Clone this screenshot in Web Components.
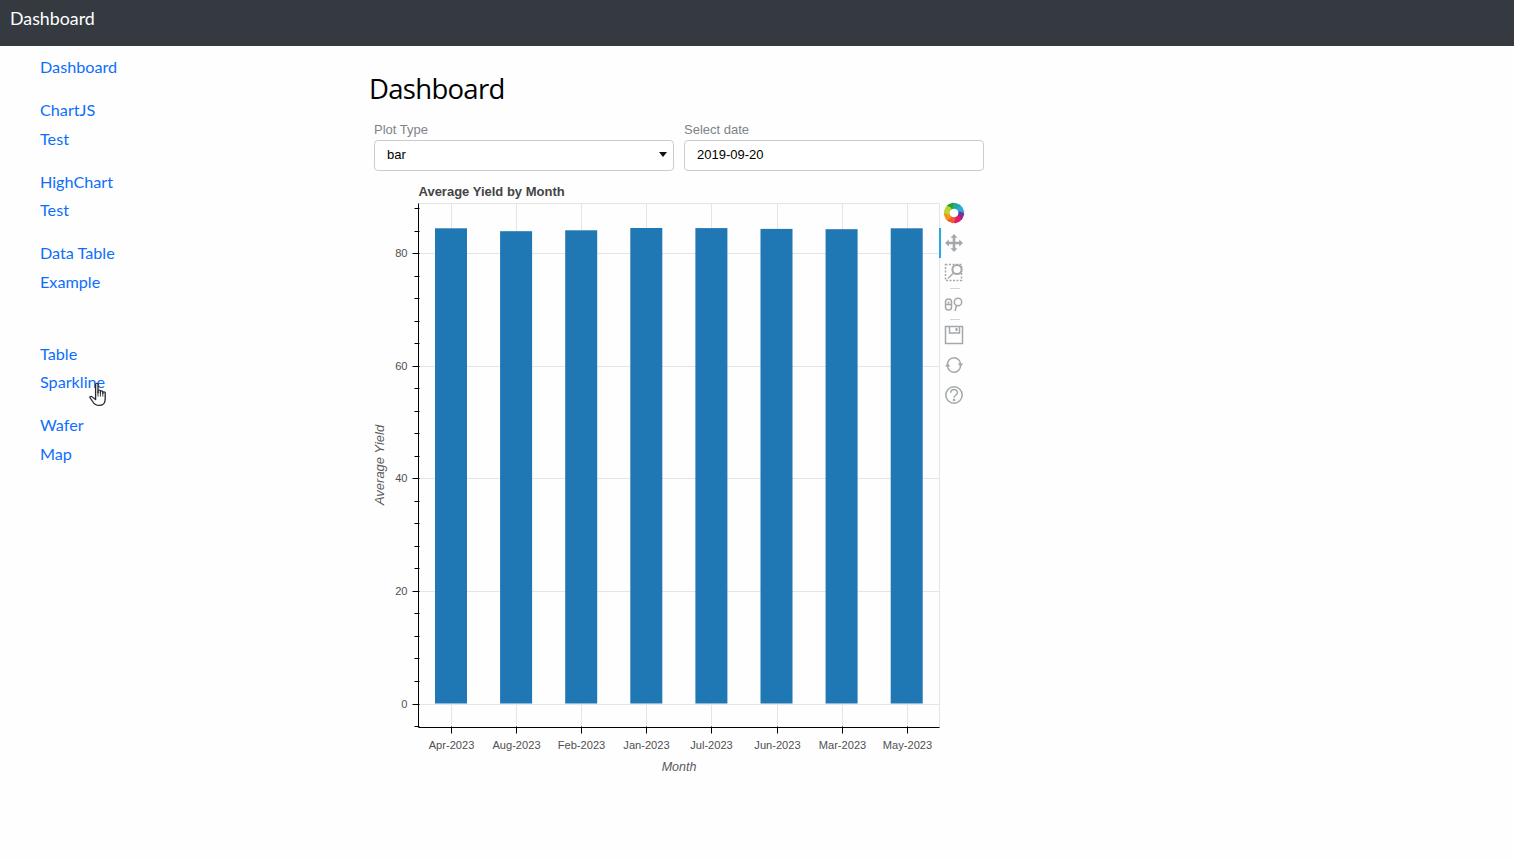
<!DOCTYPE html>
<html lang="en">
<head>
<meta charset="utf-8">
<title>Dashboard</title>
<style>
  html, body { margin: 0; height: 100%; background: #fefefe; }
  body { font-family: Lato, "Liberation Sans", sans-serif; overflow: hidden; }
</style>
</head>
<body>
<app-navbar>Dashboard</app-navbar>
<app-shell>
  <app-sidebar slot="side">
    <nav-link>Dashboard</nav-link>
    <nav-link>ChartJS<br>Test</nav-link>
    <nav-link>HighChart<br>Test</nav-link>
    <nav-link>Data Table<br>Example<br>&nbsp;</nav-link>
    <nav-link>Table<br>Sparkline<hand-cursor></hand-cursor></nav-link>
    <nav-link>Wafer<br>Map</nav-link>
  </app-sidebar>
  <page-title>Dashboard</page-title>
  <widget-row>
    <bk-field label="Plot Type" value="bar" arrow></bk-field>
    <bk-field label="Select date" value="2019-09-20"></bk-field>
  </widget-row>
  <plot-panel>
    <bar-plot></bar-plot>
    <plot-toolbar></plot-toolbar>
  </plot-panel>
</app-shell>

<script>
  // small helper so every element below reads the same way
  function shadow(el, html) {
    el.attachShadow({ mode: 'open' }).innerHTML = html;
  }

  class AppNavbar extends HTMLElement {
    constructor() {
      super();
      shadow(this, `
        <style>
          :host {
            display: block;
            height: 46px;
            box-sizing: border-box;
            padding: 5px 10px 0;
            background: #343a40;
            color: #fff;
            font: 17.8px/26px Lato, sans-serif;
          }
        </style>
        <slot></slot>`);
    }
  }

  class AppShell extends HTMLElement {
    constructor() {
      super();
      shadow(this, `
        <style>
          :host { display: grid; grid-template-columns: 370px 1fr; }
          .side { grid-row: 1 / span 2; }
          main { display: flex; flex-direction: column; }
        </style>
        <div class="side"><slot name="side"></slot></div>
        <main><slot></slot></main>`);
    }
  }

  class AppSidebar extends HTMLElement {
    constructor() {
      super();
      shadow(this, `
        <style>
          :host {
            display: flex;
            flex-direction: column;
            padding: 0.15px 0 0 40px;
          }
        </style>
        <slot></slot>`);
    }
  }

  class NavLink extends HTMLElement {
    constructor() {
      super();
      shadow(this, `
        <style>
          :host {
            display: block;
            position: relative;
            padding: 7px 0;
            color: #0d6efd;
            font: 16.2px/28.8px Lato, sans-serif;
          }
        </style>
        <slot></slot>`);
    }
  }

  class HandCursor extends HTMLElement {
    constructor() {
      super();
      shadow(this, `
        <style>
          :host { position: absolute; left: 49px; top: 49px; width: 18px; height: 25px; }
          svg { display: block; }
        </style>
        <svg width="18" height="25" viewBox="0 0 15 24" preserveAspectRatio="none">
          <path d="M5.500 2.200c0-1.300 2-1.300 2 0v8.200V8.600c0-1.200 2-1.200 2 0v2V9.400c0-1.200 2-1.200 2 0v1.600-.6c0-1.200 2-1.200 2 0v5.800c0 3.800-1.700 6.300-5.200 6.300-2.600 0-3.800-1.200-5-3.300L1 15.400c-.7-1.200.8-2.200 1.700-1.200l2.800 2.800z"
                fill="#fff" stroke="#23272b" stroke-width="1.100" stroke-linejoin="round"/>
          <path d="M7.500 9v5M9.500 10v4M11.500 10.500V14" fill="none" stroke="#23272b" stroke-width=".8"/>
        </svg>`);
    }
  }

  class PageTitle extends HTMLElement {
    constructor() {
      super();
      shadow(this, `
        <style>
          :host {
            display: block;
            padding-top: 24px;
            margin-left: -1px;
            color: #000;
            font: 27.5px/38px "Open Sans", "Liberation Sans", sans-serif;
            letter-spacing: -0.7px;
          }
        </style>
        <slot></slot>`);
    }
  }

  class WidgetRow extends HTMLElement {
    constructor() {
      super();
      shadow(this, `
        <style>
          :host { display: flex; gap: 10px; padding: 13px 0 0 4px; }
        </style>
        <slot></slot>`);
    }
  }

  class BkField extends HTMLElement {
    constructor() {
      super();
      const arrow = this.hasAttribute('arrow') ? '<i></i>' : '';
      shadow(this, `
        <style>
          :host { display: block; width: 300px; font: 13px/14px "Liberation Sans", Arial, sans-serif; }
          label { display: block; height: 19px; padding-top: 2px; box-sizing: border-box; color: #818389; }
          .box {
            display: flex;
            align-items: center;
            justify-content: space-between;
            box-sizing: border-box;
            height: 31px;
            padding: 0 6px 2px 12px;
            border: 1px solid #ccc;
            border-radius: 4px;
            background: #fff;
            color: #000;
          }
          i { border: 4px solid transparent; border-top: 5px solid #111; border-bottom: 0; }
        </style>
        <label>${this.getAttribute('label')}</label>
        <div class="box"><span>${this.getAttribute('value')}</span>${arrow}</div>`);
    }
  }

  class PlotPanel extends HTMLElement {
    constructor() {
      super();
      shadow(this, `
        <style>
          :host { display: flex; align-items: flex-start; padding-top: 9px; }
        </style>
        <slot></slot>`);
    }
  }

  const MONTHS = ['Apr-2023', 'Aug-2023', 'Feb-2023', 'Jan-2023', 'Jul-2023', 'Jun-2023', 'Mar-2023', 'May-2023'];
  const BAR_TOPS = [228.3, 231.2, 230.3, 228, 228.1, 228.9, 229.2, 228.3];

  class BarPlot extends HTMLElement {
    constructor() {
      super();
      // svg origin sits at page (370, 180), so x = page - 370, y = page - 180
      const L = 48.5, R = 569.5, T = 23.5, B = 547.5;
      const xAt = (i) => 81 + i * 65.1;
      const yAt = (v) => 523.5 - v * 5.63;
      let grid = '', bars = '', ticks = '', labels = '';

      MONTHS.forEach((m, i) => {
        const x = Math.round(xAt(i)) + 0.5;
        grid += `<path d="M${x} ${T}V${B}"/>`;
        ticks += `<path d="M${x} ${B - 1}V${B + 6}"/>`;
        labels += `<text x="${x}" y="568.500" text-anchor="middle">${m}</text>`;
        const barX = xAt(i) - 16;
        bars += `<rect x="${barX}" y="${BAR_TOPS[i] - 180}" width="32" height="${703.5 - BAR_TOPS[i]}"/>`;
      });

      for (let v = -4; v <= 88; v += 4) {
        const y = Math.round(yAt(v)) + 0.5;
        if (v % 20 === 0) {
          grid += `<path d="M${L} ${y}H${R}"/>`;
          ticks += `<path d="M${L - 6} ${y}H${L + 1}"/>`;
          labels += `<text x="${L - 11}" y="${y + 3}" text-anchor="end">${v}</text>`;
        } else {
          ticks += `<path d="M${L - 4} ${y}H${L + 1}"/>`;
        }
      }

      shadow(this, `
        <style>
          :host { display: block; width: 570px; height: 600px; flex: none; }
          svg { display: block; }
          text { font-family: "Liberation Sans", Arial, sans-serif; fill: #444; }
          .tick text { font-size: 11.1px; fill: #505050; }
          .grid { stroke: #e5e5e5; fill: none; }
          .bars { fill: #1f77b4; }
          .axis { stroke: #000; fill: none; }
        </style>
        <svg width="570" height="600" viewBox="0 0 570 600">
          <text x="48.500" y="16" font-size="13" font-weight="700">Average Yield by Month</text>
          <g class="grid">
            <path d="M${L} ${T}H${R}V${B}"/>
            ${grid}
          </g>
          <g class="bars">${bars}</g>
          <g class="axis">
            <path d="M${L} ${T}V${B}H${R}"/>
            ${ticks}
          </g>
          <g class="tick">${labels}</g>
          <text x="309" y="591" font-size="12.500" font-style="italic" text-anchor="middle" style="fill:#5a5a5a">Month</text>
          <text transform="translate(14 285) rotate(-90)" x="0" y="0" font-size="13" font-style="italic" text-anchor="middle" style="fill:#5a5a5a">Average Yield</text>
        </svg>`);
    }
  }

  const LOGO_COLORS = ['#2ca02c', '#1fa9a0', '#2fa8dc', '#7b3294', '#e6186d', '#f05a28', '#f7941e', '#bcd631'];

  class PlotToolbar extends HTMLElement {
    constructor() {
      super();
      const petals = LOGO_COLORS.map((c, i) =>
        `<rect x="-3.800" y="-10" width="7.600" height="6" rx="1.500" fill="${c}" transform="rotate(${i * 45 - 22})"/>`
      ).join('');

      shadow(this, `
        <style>
          :host {
            display: flex;
            flex-direction: column;
            width: 30px;
            margin-top: 18px;
            margin-left: -1px;
            flex: none;
          }
          .tool {
            display: flex;
            align-items: center;
            justify-content: center;
            height: 30px;
            box-sizing: border-box;
            border-left: 2px solid transparent;
          }
          .tool.active { border-left-color: #26aae1; }
          .sep { height: 1px; width: 10px; background: #d5d5d5; margin-left: 11px; flex: none; }
          svg { display: block; margin-left: -2px; }
          .ico { fill: none; stroke: #a4a8aa; stroke-width: 1.500; }
          .solid { fill: #a4a8aa; stroke: none; }
        </style>
        <div class="tool"><svg width="22" height="22" viewBox="-11 -11 22 22">${petals}<circle r="4.300" fill="#fff"/></svg></div>
        <div class="tool active"><svg width="20" height="20" viewBox="0 0 20 20">
          <path class="solid" d="M10 1l3.500 3.800h-2.200v3.900h3.900V6.500L19 10l-3.800 3.500v-2.200h-3.900v3.900h2.200L10 19l-3.500-3.800h2.200v-3.900H4.800v2.200L1 10l3.800-3.500v2.200h3.900V4.800H6.500z"/>
        </svg></div>
        <div class="tool"><svg width="20" height="20" viewBox="0 0 20 20">
          <rect class="ico" x="1.500" y="1.500" width="16" height="16" stroke-dasharray="2 1.500" stroke-width="1"/>
          <circle cx="13" cy="6.500" r="4.600" fill="#fefefe" stroke="#a4a8aa" stroke-width="2"/>
          <path class="ico" d="M9.500 10l-5.500 5.500" stroke-width="2.400"/>
        </svg></div>
        <div class="sep"></div>
        <div class="tool"><svg width="20" height="20" viewBox="0 0 20 20">
          <rect class="ico" x="1.500" y="5" width="6" height="11" rx="3" stroke-width="1.300"/>
          <path class="ico" d="M1.500 10.500h6M4.500 7.500v2" stroke-width="1.200"/>
          <circle class="ico" cx="14" cy="8" r="3.700" stroke-width="1.600"/>
          <path class="ico" d="M12.500 11.500L11 17" stroke-width="2"/>
        </svg></div>
        <div class="sep"></div>
        <div class="tool"><svg width="20" height="20" viewBox="0 0 20 20">
          <rect class="ico" x="1.500" y="1.500" width="17" height="17" stroke-width="1.200"/>
          <path class="ico" d="M5.500 1.500v6.500h10V1.500" stroke-width="1.200"/>
          <rect class="solid" x="11.500" y="3" width="2" height="3"/>
        </svg></div>
        <div class="tool"><svg width="20" height="20" viewBox="0 0 20 20">
          <path class="ico" d="M3.500 9.500A6.500 6.500 0 0 1 16.500 9M16.500 10.500A6.500 6.500 0 0 1 3.500 11"/>
          <path class="solid" d="M13.800 8.500h5.400L16.500 12zM1 11.500h5.400L3.500 8z"/>
        </svg></div>
        <div class="tool"><svg width="20" height="20" viewBox="0 0 20 20">
          <circle class="ico" cx="10" cy="10" r="8.200" stroke-width="1.800"/>
          <path class="ico" d="M6.800 7.800c0-4.300 6.600-4.300 6.600-.1 0 2.500-3.400 2.600-3.400 5.100" stroke-width="2"/>
          <circle class="solid" cx="10" cy="15" r="1.300"/>
        </svg></div>`);
    }
  }

  customElements.define('app-navbar', AppNavbar);
  customElements.define('app-shell', AppShell);
  customElements.define('app-sidebar', AppSidebar);
  customElements.define('nav-link', NavLink);
  customElements.define('hand-cursor', HandCursor);
  customElements.define('page-title', PageTitle);
  customElements.define('widget-row', WidgetRow);
  customElements.define('bk-field', BkField);
  customElements.define('plot-panel', PlotPanel);
  customElements.define('bar-plot', BarPlot);
  customElements.define('plot-toolbar', PlotToolbar);
</script>
</body>
</html>
